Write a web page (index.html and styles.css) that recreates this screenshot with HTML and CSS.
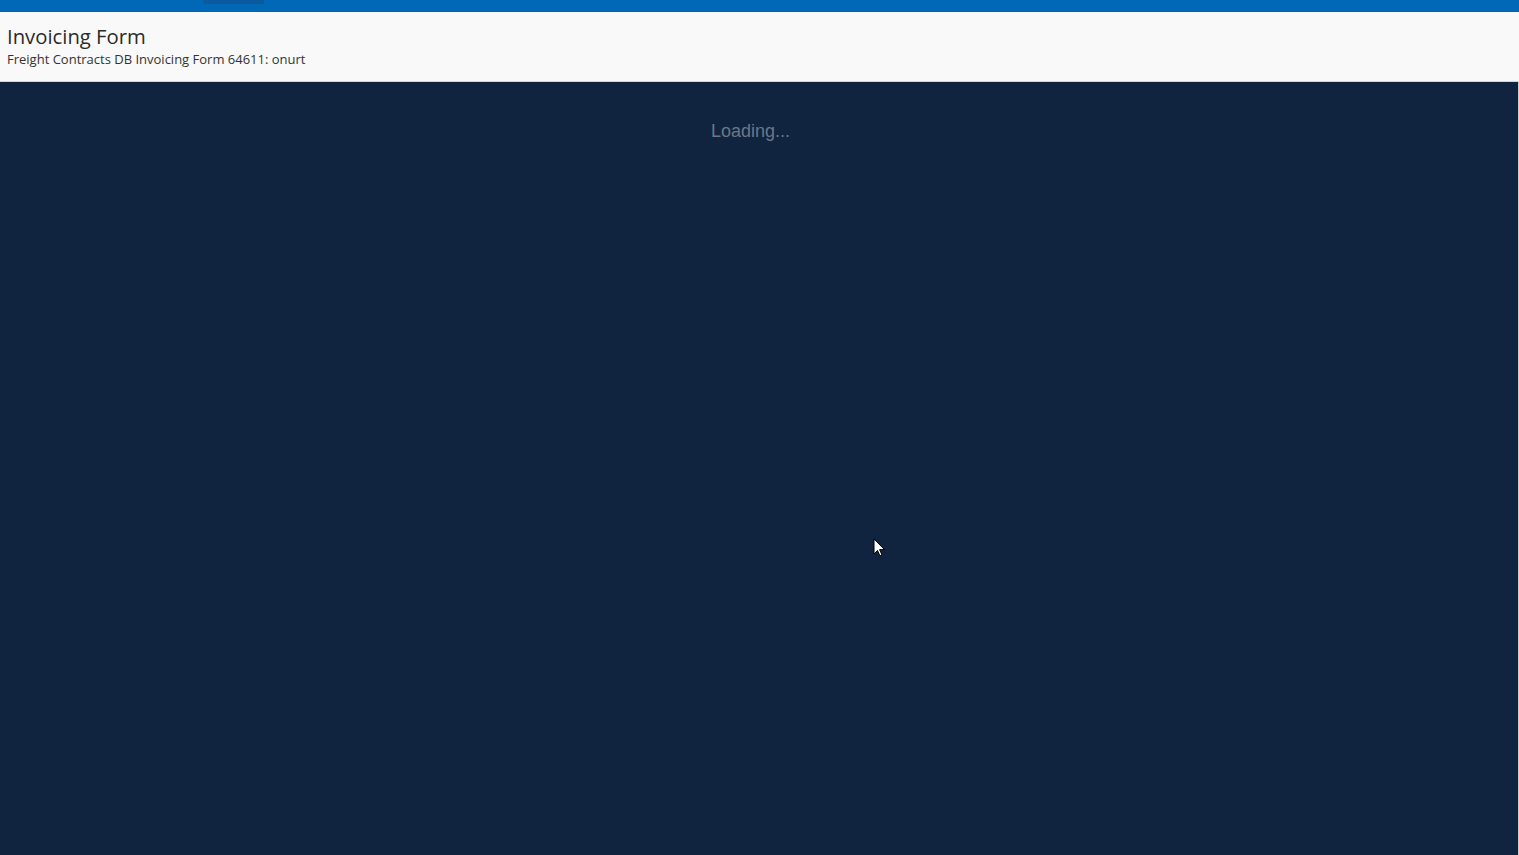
FILE: index.html
```html
<!DOCTYPE html>
<html lang="en">
<head>
  <meta charset="UTF-8" />
  <title>Invoicing Form</title>
  <link rel="stylesheet" href="styles.css">
</head>
<body>

<div class="topbar">
  <span class="topbar-tab"></span>
</div>

<header class="page-header">
  <h1>Invoicing Form</h1>
  <div class="subtitle">Freight Contracts DB Invoicing Form 64611: onurt</div>
</header>

<main class="content">
  <div class="loading">Loading...</div>
</main>

<svg class="cursor" width="13" height="20" viewBox="0 0 13 20">
  <path d="M1 1 L1 16 L4.5 12.5 L7 18 L9 17 L6.6 11.6 L11.5 11.6 Z" fill="#fff" stroke="#000" stroke-width="1"/>
</svg>

</body>
</html>
```

FILE: styles.css
```css
html, body {
  margin: 0;
  padding: 0;
  height: 100%;
}

body {
  font-family: 'Open Sans', sans-serif;
  background-color: #10243f;
  display: flex;
  flex-direction: column;
  overflow: hidden;
}

.topbar {
  height: 12px;
  background-color: #0068b6;
  padding-left: 203px;
  flex-shrink: 0;
}

.topbar-tab {
  display: block;
  width: 61px;
  height: 4px;
  background-color: #0b5a9e;
  border-radius: 0 0 2px 2px;
}

.page-header {
  background-color: #f9f9f9;
  border-bottom: 1px solid #d4d4d4;
  padding: 11px 7px 13px;
  color: #333;
  flex-shrink: 0;
}

.page-header h1 {
  margin: 0;
  font-size: 20.3px;
  font-weight: normal;
  line-height: 27px;
  color: #2b2b2b;
}

.subtitle {
  font-size: 13px;
  line-height: 18px;
  color: #333;
}

.content {
  flex: 1;
  border-right: 1px solid #c9ccd1;
}

.loading {
  width: 1501px;
  text-align: center;
  padding-top: 39px;
  font-family: 'Liberation Sans', Arial, sans-serif;
  font-size: 18px;
  color: #6b7787;
}

.cursor {
  position: absolute;
  left: 873px;
  top: 538px;
}
```
